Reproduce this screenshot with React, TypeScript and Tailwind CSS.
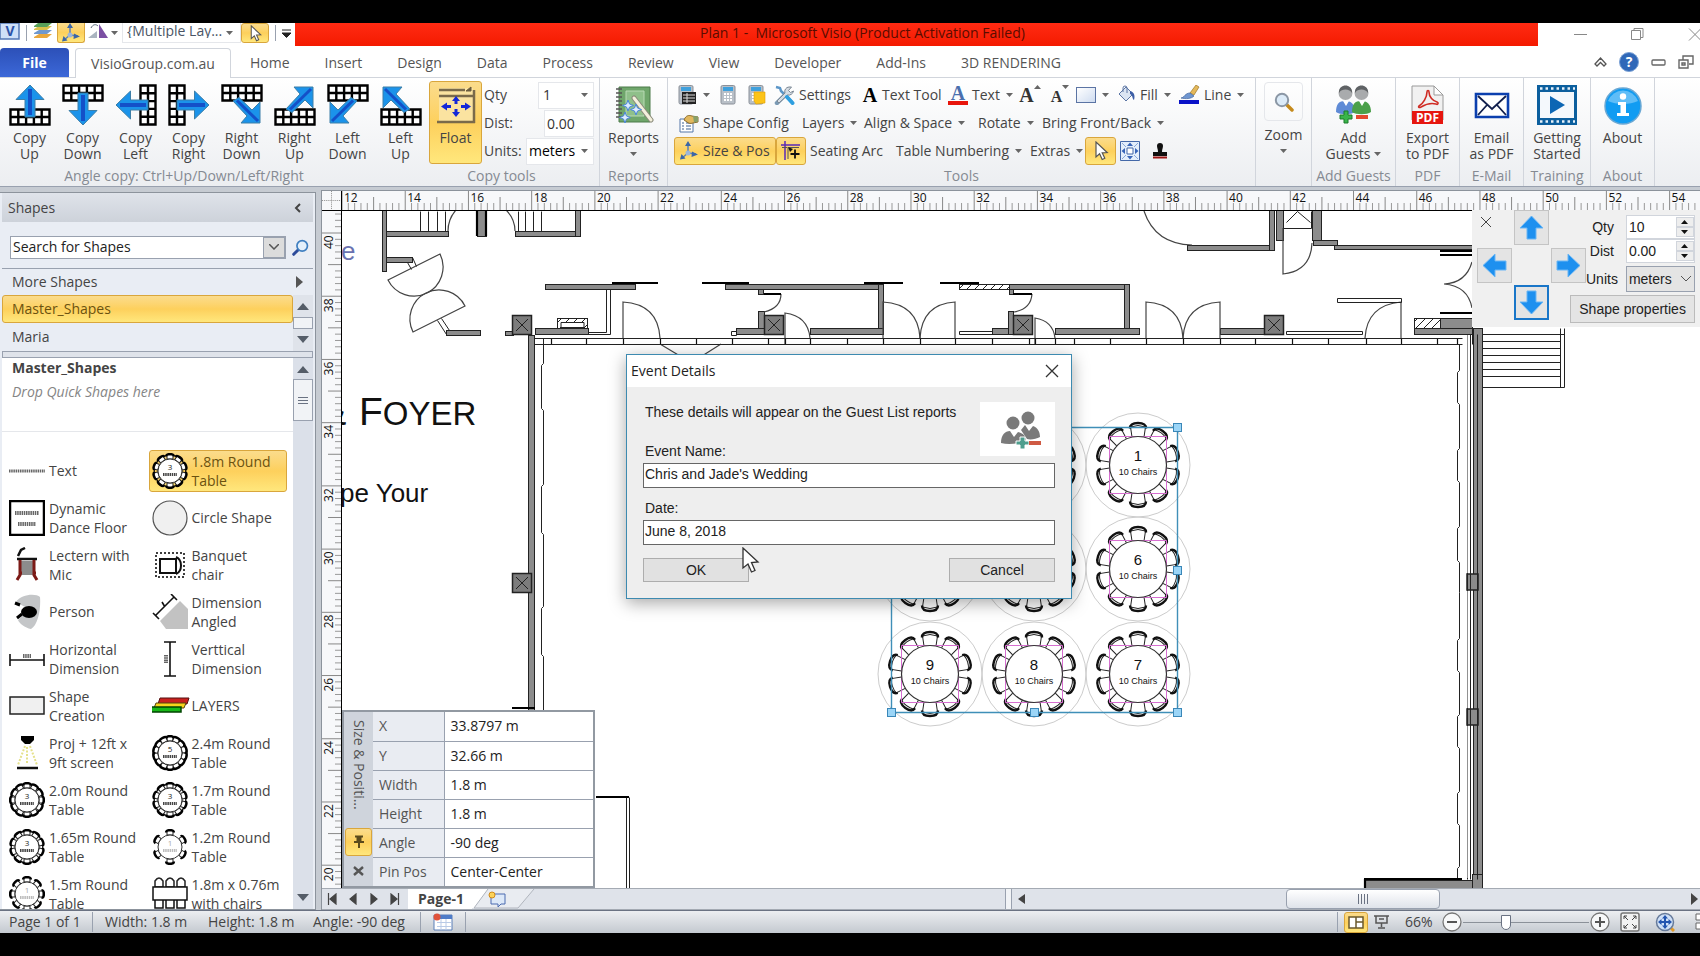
import type { ReactNode } from "react";

const UNIT = 31.61;

const highlight =
  "border border-[#d9a63c] rounded-[3px] bg-linear-to-b from-[#fbdc8c] via-[#fdd05c] to-[#ffe77c]";

/* ---------- small shared glyphs ---------- */

function Caret({ className = "" }: { className?: string }) {
  return (
    <svg width="7" height="4" viewBox="0 0 7 4" className={`shrink-0 ${className}`}>
      <path d="M0 0h7L3.500 4z" fill="#666" />
    </svg>
  );
}

function Pointer({ size = 20 }: { size?: number }) {
  return (
    <svg width={size} height={size} viewBox="0 0 20 20" className="shrink-0">
      <path
        d="M5 1v15l3.600-3.300 2.600 5.800 2.600-1.200-2.600-5.500 5-.3z"
        fill="#fff"
        stroke="#555"
        strokeWidth="1.200"
      />
    </svg>
  );
}

function Axis() {
  return (
    <svg width="20" height="20" viewBox="0 0 20 20" className="shrink-0">
      <path d="M9 3v9L3 17M9 12l8 1" stroke="#5d7fb4" strokeWidth="1.500" fill="none" />
      <path d="M9 0l3 5H6zM1 18.500l1.500-5.500 4 4.500zM19 13.500l-6-3-.5 5.500z" fill="#3c66a6" />
      <circle cx="9" cy="12" r="2.500" fill="#9db6d9" />
    </svg>
  );
}

function Glass({ size = 20, lens = "#dcebf8", handle = "#c58a1c", rim = "#8b97a5" }) {
  return (
    <svg width={size} height={size} viewBox="0 0 20 20" className="shrink-0">
      <path d="M12 12l6 6" stroke={handle} strokeWidth="3.500" strokeLinecap="round" />
      <circle cx="8" cy="8" r="6.200" fill={lens} stroke={rim} strokeWidth="2" />
    </svg>
  );
}

/* ---------- ribbon icons ---------- */

type CopyKind = "up" | "down" | "left" | "right" | "rd" | "ru" | "ld" | "lu";

const straight = "M21 1L35 15.500H26V33H16V15.500H7Z";
const diagonal = "M12 17L18 13.500L31 26L39 18V39H20L26 32Z";

const copyShapes: Record<CopyKind, { grid: string; arrow: string; transform: string }> = {
  up: { grid: "bottom", arrow: straight, transform: "" },
  down: { grid: "top", arrow: straight, transform: "rotate(180 21 21)" },
  left: { grid: "right", arrow: straight, transform: "rotate(-90 21 21)" },
  right: { grid: "left", arrow: straight, transform: "rotate(90 21 21)" },
  rd: { grid: "top", arrow: diagonal, transform: "" },
  ru: { grid: "bottom", arrow: diagonal, transform: "matrix(1 0 0 -1 0 42)" },
  ld: { grid: "top", arrow: diagonal, transform: "matrix(-1 0 0 1 42 0)" },
  lu: { grid: "bottom", arrow: diagonal, transform: "matrix(-1 0 0 -1 42 42)" },
};

function CopyIcon({ kind }: { kind: CopyKind }) {
  const shape = copyShapes[kind];
  const wide = "M1.500 1.500h39v15h-39zM1.500 9h39M9.300 1.500v15M17.100 1.500v15M24.900 1.500v15M32.700 1.500v15";
  const tall = "M1.500 1.500h15v39h-15zM9 1.500v39M1.500 9.300h15M1.500 17.100h15M1.500 24.900h15M1.500 32.700h15";
  const shift =
    shape.grid === "bottom" ? "translate(0 24)" : shape.grid === "right" ? "translate(24 0)" : "";
  return (
    <svg width="42" height="42" viewBox="0 0 42 42">
      <path
        d={shape.grid === "left" || shape.grid === "right" ? tall : wide}
        transform={shift}
        fill="#fff"
        stroke="#000"
        strokeWidth="2.400"
      />
      <g transform={shape.transform}>
        <path d={shape.arrow} fill="#1b93ea" stroke="#3d7fa8" strokeWidth="1" />
        {shape.arrow === straight ? (
          <path d="M21 5V31" stroke="#1450c8" strokeWidth="4" />
        ) : (
          <path d="M16 16.500L37 37" stroke="#1450c8" strokeWidth="3" />
        )}
      </g>
    </svg>
  );
}

function FloatIcon() {
  return (
    <svg width="42" height="42" viewBox="0 0 42 42">
      <path d="M4 4h34v34H4z" fill="#fbe3a0" />
      <path d="M4 6h26M4 12h34M39 6v33M2 38h38" stroke="#7a6a4a" strokeWidth="2.500" fill="none" />
      <path d="M31 7h5V3z" fill="#6b5c3e" stroke="#6b5c3e" />
      <path
        d="M21 12l4 5h-2.500v3h-3v-3H17zM21 33l4-5h-2.500v-3h-3v3H17zM6 22.500l6-4v2.500h4v3h-4v2.500zM36 22.500l-6-4v2.500h-4v3h4v2.500z"
        fill="#1428d8"
      />
    </svg>
  );
}

function ReportsIcon() {
  return (
    <svg width="40" height="40" viewBox="0 0 40 40">
      <path d="M5 2h31v35H5z" fill="#6fa66b" stroke="#4d7a4b" />
      <path d="M12 6h18v25H12z" fill="#8fc08a" stroke="#b9dab5" />
      <path d="M2 4h6M2 8h6M2 12h6M2 16h6M2 20h6M2 24h6M2 28h6M2 32h6" stroke="#555" strokeWidth="1.500" />
      <path d="M20 13l17 22" stroke="#8a8a7a" strokeWidth="5" strokeLinecap="round" />
      <path d="M20 13l17 22" stroke="#f3f0dc" strokeWidth="3" strokeLinecap="round" />
      <path
        d="M14 15l1.500 4 4 1.500-4 1.500-1.500 4-1.500-4-4-1.500 4-1.500zM22 19l1.500 4 4 1.500-4 1.500-1.500 4-1.500-4-4-1.500 4-1.500zM11 27l1.500 4 4 1.500-4 1.500-1.500 4-1.500-4-4-1.500 4-1.500z"
        fill="#dcecff"
        stroke="#4a86d8"
      />
    </svg>
  );
}

function Calc({ accent }: { accent?: "grid" | "note" }) {
  return (
    <svg width="19" height="20" viewBox="0 0 19 20" className="shrink-0">
      <rect x="1" y=".5" width="14" height="18.500" rx="1.500" fill="#b9c0c8" stroke="#8a9099" />
      <rect x="3" y="2" width="10" height="4" fill="#3fa0dc" />
      <path d="M4 9h8M4 12h8M4 15h8" stroke="#fff" strokeWidth="1.800" strokeDasharray="2 1" />
      {accent === "grid" && (
        <g>
          <path d="M4 7h14v12H4z" fill="#222" />
          <path d="M5 10h12M5 13h12M5 16h12M9 8v10" stroke="#ddd" />
        </g>
      )}
      {accent === "note" && <path d="M6 7h11v11l-9 1-2-3z" fill="#fcc419" stroke="#e0a000" strokeWidth=".6" />}
    </svg>
  );
}

function SettingsIcon() {
  return (
    <svg width="21" height="20" viewBox="0 0 21 20" className="shrink-0">
      <path d="M2 2l4 1 1 3 11 11" stroke="#5b96c8" strokeWidth="2.500" fill="none" />
      <path d="M3 18l9-9" stroke="#7b9ab4" strokeWidth="4.500" strokeLinecap="round" />
      <path d="M15 2a4.500 4.500 0 0 0-4 6L3 16l2 2 8.500-8a5 5 0 0 0 6-4l-3 1.500-2-2L17.500 2z" fill="#d5dce3" stroke="#7b8794" />
      <path d="M13 12l5.500 6" stroke="#2f9fe0" strokeWidth="4" strokeLinecap="round" />
    </svg>
  );
}

function ConfigIcon() {
  return (
    <svg width="20" height="19" viewBox="0 0 20 19" className="shrink-0">
      <path d="M1 5h13v13H1z" fill="#fff" stroke="#5477a8" />
      <path d="M3 9h2M7 9h5M3 12h2M7 12h5M3 15h2M7 15h5" stroke="#7f96b8" strokeWidth="1.500" />
      <path d="M5 6c2-5 5-5 8-4l6 1v5l-5 1c-3 1-5 0-6-1z" fill="#e2b85e" stroke="#8a6b2c" />
      <path d="M14 2l5 .5v5l-4 1z" fill="#88a06a" />
    </svg>
  );
}

function GuideIcon() {
  return (
    <svg width="20" height="20" viewBox="0 0 20 20" className="shrink-0">
      <path d="M0 4h19M4 0v19" stroke="#5a2ab8" strokeWidth="1.500" />
      <path d="M1 6.500h5M7 6v12M8 6.500h10" stroke="#555" />
      <path d="M14 8.500v9M9.500 13h9" stroke="#111" strokeWidth="1.800" />
      <path d="M7 6l5 2-3 3z" fill="#111" />
    </svg>
  );
}

function CenterIcon() {
  return (
    <svg width="20" height="20" viewBox="0 0 20 20" className="shrink-0">
      <path d="M.5.5h19v19H.5z" fill="#e3eefb" stroke="#4468a8" />
      <path d="M7 7h6v6H7z" fill="#fff" stroke="#4468a8" />
      <path d="M10 1.500l3 3.500H7zM10 18.500L7 15h6zM1.500 10L5 7v6zM18.500 10L15 13V7z" fill="#3764b8" />
      <path d="M2 2l4 4M18 2l-4 4M2 18l4-4M18 18l-4-4" stroke="#8aa8d8" />
    </svg>
  );
}

function StampIcon() {
  return (
    <svg width="16" height="17" viewBox="0 0 16 17" className="shrink-0">
      <path d="M5 3a3 3 0 0 1 6 0c0 2-1 3-1 6h5v4H1V9h5c0-3-1-4-1-6z" fill="#111" />
      <path d="M1 14.500h14" stroke="#9c1414" strokeWidth="2" />
    </svg>
  );
}

function BucketIcon() {
  return (
    <svg width="20" height="20" viewBox="0 0 20 20" className="shrink-0">
      <path d="M3 9l7-7 7 7-7 7z" fill="#dbe5f3" stroke="#5c76a5" />
      <path d="M7 7V3a2 2 0 0 1 4 0v5" fill="none" stroke="#5c76a5" />
      <path d="M14 6c5 1 5 6 4 9-2-1-1-5-4-6z" fill="#3c5ea6" />
    </svg>
  );
}

function BrushIcon() {
  return (
    <svg width="22" height="20" viewBox="0 0 22 20" className="shrink-0">
      <path d="M12 8l6-8 3 2-5 8z" fill="#e5b95b" stroke="#9b7627" strokeWidth=".7" />
      <path d="M3 13c3 0 4-5 9-5l4 3c-3 3-8 3-13 2z" fill="#6f96d0" stroke="#40659f" strokeWidth=".7" />
      <path d="M1 15h20v4H1z" fill="#0a12c8" />
    </svg>
  );
}

function Person({ x, y, coat }: { x: number; y: number; coat: string }) {
  return (
    <g transform={`translate(${x} ${y})`}>
      <path d="M0 27c0-8 3-11 9-11s10 3 10 11c-4 3-15 3-19 0z" fill={coat} />
      <path d="M7 16l3 5 3-5z" fill="#fff" />
      <circle cx="9.500" cy="8" r="7" fill="#a9abad" />
      <path d="M3 8c-1-10 14-10 13 0-2-4-10-5-13 0z" fill="#5f6265" />
    </g>
  );
}

function GuestsIcon() {
  return (
    <svg width="38" height="40" viewBox="0 0 38 40">
      <Person x={1} y={0} coat="#5f8bd6" />
      <Person x={17} y={0} coat="#4ba04a" />
      <path d="M9 26h4v4h4v4h-4v4H9v-4H5v-4h4z" fill="#39b54a" stroke="#1c7a2a" />
      <path d="M21 30h12v4H21z" fill="#e5482e" />
    </svg>
  );
}

function PdfIcon() {
  return (
    <svg width="34" height="40" viewBox="0 0 34 40">
      <path d="M1 1h22l9 9v25H1z" fill="#f1f1f1" stroke="#9a9a9a" />
      <path d="M23 1v9h9z" fill="#fff" stroke="#9a9a9a" />
      <path
        d="M8 21c4-2 8-9 8-14 0-2 2-2 2 0 0 5 4 9 8 10 2 1 1 3-1 2-4-1-10 0-15 3-2 1-3 0-2-1z"
        fill="none"
        stroke="#cf2b23"
        strokeWidth="1.600"
      />
      <path d="M1 26h31v13H1z" fill="#e6160f" />
      <text x="16.500" y="37" textAnchor="middle" fontSize="12" fontWeight="700" fill="#fff">
        PDF
      </text>
    </svg>
  );
}

function MailIcon() {
  return (
    <svg width="36" height="40" viewBox="0 0 36 40">
      <path d="M2 9h32v23H2z" fill="#fff" stroke="#0b3fae" strokeWidth="2.600" />
      <path d="M4 11l14 13 14-13M4 30l9-10M32 30l-9-10" fill="none" stroke="#111f4d" strokeWidth="1.800" />
    </svg>
  );
}

function FilmIcon() {
  return (
    <svg width="40" height="40" viewBox="0 0 40 40">
      <path d="M0 0h40v40H0z" fill="#0c5f9e" />
      <path d="M3 7h34v26H3z" fill="#f4f8fc" />
      <path d="M3 3.500h35M3 36.500h35" stroke="#e8f2fa" strokeWidth="2.500" strokeDasharray="2.500 3" />
      <path d="M13 11l15 9-15 9z" fill="#0c66b4" />
    </svg>
  );
}

function AboutIcon() {
  return (
    <svg width="40" height="40" viewBox="0 0 40 40">
      <circle cx="20" cy="21" r="18" fill="#119cf2" stroke="#6aa8d4" strokeWidth="1.500" />
      <path d="M5 16a16 16 0 0 1 30 0c-8 4-22 4-30 0z" fill="#5fbdf7" />
      <circle cx="20" cy="11.500" r="3.200" fill="#fff" />
      <path d="M15 17h8v11h3v3H14v-3h3.500v-8H15z" fill="#fff" />
    </svg>
  );
}

/* ---------- title and tabs ---------- */

function TitleBar() {
  return (
    <header className="flex h-6 shrink-0 items-start bg-white">
      <div className="flex h-5 shrink-0 items-center">
        <svg width="20" height="20" viewBox="0 0 20 20">
          <path d="M0 0h19v16H0z" fill="#cfe0f7" stroke="#5377b5" strokeWidth="1.500" />
          <text x="10" y="13" textAnchor="middle" fontSize="14" fontWeight="700" fill="#2b53a8">
            V
          </text>
        </svg>
        <div className="mx-1.5 h-4 w-px bg-gray-400" />
        <svg width="20" height="20" viewBox="0 0 20 20">
          <path d="M1 14l5-3h13l-5 4H1z" fill="#e9a73c" />
          <path d="M1 10l5-3h13l-5 4H1z" fill="#6f98cf" />
          <path d="M1 6l5-3h13l-5 4H1z" fill="#d9c04a" />
          <path d="M1 3l4-3h14l-5 4H1z" fill="#58a05a" />
        </svg>
        <button
          aria-label="Size and position"
          className={`ml-1 flex h-5 w-7 items-center justify-center overflow-hidden rounded-t-none border-t-0 ${highlight}`}
        >
          <Axis />
        </button>
        <svg width="24" height="20" viewBox="0 0 24 20" className="ml-0.5">
          <path d="M1 15l9-7v7z" fill="#aab4c0" />
          <path d="M12 1l9 14h-9z" fill="#7b4fa3" />
          <path d="M4 5c2-4 5-4 7-2" stroke="#567" fill="none" />
        </svg>
        <Caret />
        <label className="relative ml-1 flex items-center">
          <span className="sr-only">Layer</span>
          <select className="h-5 w-[119px] appearance-none border border-t-0 border-gray-200 bg-white pb-1 pl-1 text-sm leading-4 text-gray-600">
            <option>{"{Multiple Lay..."}</option>
          </select>
          <Caret className="absolute right-2" />
        </label>
        <button aria-label="Pointer tool" className={`flex h-5 w-7 items-center justify-center ${highlight}`}>
          <Pointer size={17} />
        </button>
        <div className="mx-1.5 h-4 w-px bg-gray-400" />
        <svg width="9" height="9" viewBox="0 0 9 9" className="mr-1">
          <path d="M0 1h9M0 4h9L4.500 8.500z" stroke="#222" fill="#222" />
        </svg>
      </div>
      <div className="h-[23px] flex-1 bg-linear-to-b from-[#ff2a12] to-[#f41a00] pr-[108px] text-center text-sm leading-5 text-[#5a0c00]">
        Plan 1 -&nbsp; Microsoft Visio (Product Activation Failed)
      </div>
      <div className="flex w-[162px] shrink-0 items-center justify-end gap-11 overflow-hidden">
        <button aria-label="Minimize">
          <svg width="13" height="22" viewBox="0 0 13 22">
            <path d="M0 11.500h13" stroke="#888" />
          </svg>
        </button>
        <button aria-label="Restore">
          <svg width="13" height="22" viewBox="0 0 13 22">
            <path d="M.5 7.500h9v9h-9zM3 7.500v-2h9v9h-2.500" fill="none" stroke="#888" />
          </svg>
        </button>
        <button aria-label="Close">
          <svg width="12" height="22" viewBox="0 0 12 22">
            <path d="M1 5.500l12 12M13 5.500l-12 12" stroke="#888" />
          </svg>
        </button>
      </div>
    </header>
  );
}

const tabs = ["Home", "Insert", "Design", "Data", "Process", "Review", "View", "Developer", "Add-Ins", "3D RENDERING"];

function TabBar() {
  return (
    <nav className="flex h-[31px] shrink-0 items-end border-b border-gray-300 bg-white text-sm text-[#555]">
      <button className="h-[29px] w-[69px] rounded-t-sm bg-linear-to-b from-[#2c50b8] to-[#3c68d8] font-bold text-white">
        File
      </button>
      <button className="-mb-px ml-1.5 h-[30px] w-[156px] rounded-t border border-b-0 border-gray-300 bg-white">
        VisioGroup.com.au
      </button>
      <div className="ml-[19px] flex h-[29px] flex-1 items-center gap-[35px]">
        {tabs.map((tab) => (
          <button key={tab} className="whitespace-nowrap">
            {tab}
          </button>
        ))}
      </div>
      <div className="flex h-[31px] items-center gap-3 pr-1.5">
        <svg width="13" height="12" viewBox="0 0 13 12">
          <path d="M1 8l5.500-6L12 8l-2 2-3.500-3.500L3 10z" fill="#fff" stroke="#555" strokeWidth="1.300" />
        </svg>
        <button aria-label="Help">
          <svg width="20" height="20" viewBox="0 0 20 20">
            <circle cx="10" cy="10" r="9.500" fill="#3068b8" stroke="#7da3d6" />
            <text x="10" y="15" textAnchor="middle" fontSize="14" fontWeight="700" fill="#fff">
              ?
            </text>
          </svg>
        </button>
        <svg width="15" height="12" viewBox="0 0 15 12">
          <rect x="1" y="4" width="13" height="5" rx="1" fill="#fff" stroke="#666" strokeWidth="1.300" />
        </svg>
        <svg width="16" height="14" viewBox="0 0 16 14">
          <path d="M5 5V1h10v8h-4M1 5h9v8H1zM4 8h3v2H4z" fill="none" stroke="#666" strokeWidth="1.400" />
        </svg>
      </div>
    </nav>
  );
}

/* ---------- ribbon ---------- */

function BigButton({
  icon,
  lines,
  caret,
  className = "w-[53px] pt-[6px]",
}: {
  icon: ReactNode;
  lines: string[];
  caret?: boolean;
  className?: string;
}) {
  return (
    <button className={`flex flex-col items-center text-sm leading-4 whitespace-nowrap ${className}`}>
      <span className="mb-1 flex h-[42px] items-center">{icon}</span>
      {lines.map((line, i) => (
        <span key={line} className="flex items-center gap-1">
          {line}
          {caret && i === lines.length - 1 && <Caret />}
        </span>
      ))}
    </button>
  );
}

function Group({ label, className, children }: { label: string; className: string; children: ReactNode }) {
  return (
    <div className={`flex shrink-0 flex-col border-r border-gray-300 ${className}`}>
      <div className="flex flex-1 justify-center">{children}</div>
      <div className="h-[18px] text-center text-sm leading-4 whitespace-nowrap text-[#858a92]">{label}</div>
    </div>
  );
}

function ToolButton({
  icon,
  text,
  caret,
  className = "",
}: {
  icon?: ReactNode;
  text?: string;
  caret?: boolean;
  className?: string;
}) {
  return (
    <button className={`flex h-7 shrink-0 items-center gap-1 whitespace-nowrap ${className}`}>
      {icon}
      {text && <span>{text}</span>}
      {caret && <Caret className="ml-0.5" />}
    </button>
  );
}

const copyButtons: { kind: CopyKind; lines: string[] }[] = [
  { kind: "up", lines: ["Copy", "Up"] },
  { kind: "down", lines: ["Copy", "Down"] },
  { kind: "left", lines: ["Copy", "Left"] },
  { kind: "right", lines: ["Copy", "Right"] },
  { kind: "rd", lines: ["Right", "Down"] },
  { kind: "ru", lines: ["Right", "Up"] },
  { kind: "ld", lines: ["Left", "Down"] },
  { kind: "lu", lines: ["Left", "Up"] },
];

function CopyTools() {
  return (
    <div className="flex w-[600px] shrink-0 flex-col border-r border-gray-300">
      <div className="flex flex-1 pl-[3px]">
        {copyButtons.map((button) => (
          <BigButton key={button.kind} icon={<CopyIcon kind={button.kind} />} lines={button.lines} />
        ))}
        <BigButton
          icon={<FloatIcon />}
          lines={["Float"]}
          className={`ml-0.5 mt-[3px] h-[83px] w-[53px] pt-[2px] ${highlight}`}
        />
        <div className="flex w-[112px] flex-col pt-[3px] pl-0.5 text-sm">
          <label className="flex h-7 items-center justify-between">
            Qty
            <span className="relative flex items-center">
              <select className="h-[27px] w-14 appearance-none border border-gray-200 bg-white pl-1 text-[#333]">
                <option>1</option>
              </select>
              <Caret className="absolute right-1.5" />
            </span>
          </label>
          <label className="flex h-7 items-center justify-between">
            Dist:
            <input defaultValue="0.00" className="h-[27px] w-[50px] border border-gray-200 bg-white pl-0.5 text-[#333]" />
          </label>
          <label className="flex h-7 items-center justify-between">
            Units:
            <span className="relative flex items-center">
              <select className="h-[27px] w-17 appearance-none border border-gray-200 bg-white pl-0.5 text-black">
                <option>meters</option>
              </select>
              <Caret className="absolute right-1.5" />
            </span>
          </label>
        </div>
      </div>
      <div className="flex h-[18px] text-center text-sm leading-4 text-[#858a92]">
        <div className="w-[368px]">Angle copy: Ctrl+Up/Down/Left/Right</div>
        <div className="flex-1 pl-9">Copy tools</div>
      </div>
    </div>
  );
}

function ToolsPanel() {
  return (
    <div className="flex flex-1 flex-col pt-[3px] pl-1.5 text-sm">
      <div className="flex">
        <ToolButton className="w-10 pl-1" icon={<Calc accent="grid" />} caret />
        <ToolButton className="w-7 pl-1.5" icon={<Calc />} />
        <ToolButton className="w-7 pl-1.5" icon={<Calc accent="note" />} />
        <ToolButton className="w-22 pl-1" icon={<SettingsIcon />} text="Settings" />
        <ToolButton
          className="w-22 pl-1"
          icon={<span className="w-4 font-['Liberation_Serif',serif] text-xl leading-5 font-bold text-black">A</span>}
          text="Text Tool"
        />
        <ToolButton
          className="w-17 pl-0.5"
          icon={
            <span className="w-5 border-b-4 border-[#e8150c] font-['Liberation_Serif',serif] text-xl leading-4 font-bold text-[#4a6fae]">
              A
            </span>
          }
          text="Text"
          caret
        />
        <ToolButton
          className="w-8 justify-center"
          icon={
            <>
              <span className="-mr-1 font-['Liberation_Serif',serif] text-xl leading-5 font-bold text-[#333]">A</span>
              <Caret className="mb-4 rotate-180" />
            </>
          }
        />
        <ToolButton
          className="w-7 justify-center"
          icon={
            <>
              <span className="mt-1 -mr-1 font-['Liberation_Serif',serif] text-base leading-5 font-bold text-[#333]">A</span>
              <Caret className="mb-4" />
            </>
          }
        />
        <ToolButton
          className="w-10"
          icon={<span className="ml-0.5 h-4 w-5 border border-[#5b74a4] bg-linear-to-br from-white to-[#cfdcf0]" />}
          caret
        />
        <ToolButton className="w-16 pl-0.5" icon={<BucketIcon />} text="Fill" caret />
        <ToolButton className="w-17" icon={<BrushIcon />} text="Line" caret />
      </div>
      <div className="flex">
        <ToolButton className="w-32 pl-[5px]" icon={<ConfigIcon />} text="Shape Config" />
        <ToolButton className="w-[62px]" text="Layers" caret />
        <ToolButton className="w-[114px]" text="Align & Space" caret />
        <ToolButton className="w-16" text="Rotate" caret />
        <ToolButton text="Bring Front/Back" caret />
      </div>
      <div className="flex">
        <ToolButton className={`w-[102px] pl-1 ${highlight}`} icon={<Axis />} text="Size & Pos" />
        <ToolButton className={`w-[30px] justify-center ${highlight}`} icon={<GuideIcon />} />
        <ToolButton className="w-[90px] pl-1" text="Seating Arc" />
        <ToolButton className="w-[134px]" text="Table Numbering" caret />
        <ToolButton className="w-[55px]" text="Extras" caret />
        <ToolButton className={`w-[31px] justify-center ${highlight}`} icon={<Pointer />} />
        <ToolButton className="w-8 pl-1" icon={<CenterIcon />} />
        <ToolButton className="pl-1" icon={<StampIcon />} />
      </div>
    </div>
  );
}

function Ribbon() {
  return (
    <section className="flex h-[109px] shrink-0 overflow-hidden border-b border-gray-400 bg-linear-to-b from-white to-[#eceef1] text-[#444]">
      <CopyTools />
      <Group label="Reports" className="w-[68px]">
        <button className="flex flex-col items-center pt-[7px] text-sm leading-4">
          <span className="mb-1 h-[41px]">
            <ReportsIcon />
          </span>
          Reports
          <Caret className="mt-1.5" />
        </button>
      </Group>
      <Group label="Tools" className="w-[588px]">
        <ToolsPanel />
      </Group>
      <Group label="" className="w-14">
        <button className="flex flex-col items-center pt-1 text-sm leading-4">
          <span className="mb-[6px] flex h-[39px] w-[39px] items-center justify-center rounded border border-gray-200">
            <Glass />
          </span>
          Zoom
          <Caret className="mt-1.5" />
        </button>
      </Group>
      <Group label="Add Guests" className="w-[84px]">
        <BigButton icon={<GuestsIcon />} lines={["Add", "Guests"]} caret />
      </Group>
      <Group label="PDF" className="w-16">
        <BigButton icon={<PdfIcon />} lines={["Export", "to PDF"]} />
      </Group>
      <Group label="E-Mail" className="w-16">
        <BigButton icon={<MailIcon />} lines={["Email", "as PDF"]} />
      </Group>
      <Group label="Training" className="w-[67px]">
        <BigButton icon={<FilmIcon />} lines={["Getting", "Started"]} />
      </Group>
      <Group label="About" className="w-16">
        <BigButton icon={<AboutIcon />} lines={["About"]} />
      </Group>
    </section>
  );
}

/* ---------- shapes panel ---------- */

function RoundThumb({ chairs, label = "3", faint }: { chairs: number; label?: string; faint?: boolean }) {
  return (
    <svg width="36" height="36" viewBox="-18 -18 36 36">
      {Array.from({ length: chairs }, (_, i) => (
        <g key={i} transform={`rotate(${(360 / chairs) * i})`}>
          <path d="M-3-12v-4h6v4z" fill="#fff" stroke="#222" />
          <path d="M-4-14.500q0-2.500 4-2.500t4 2.500" fill="none" stroke="#000" strokeWidth="2.200" />
        </g>
      ))}
      <circle r="12" fill="#fff" stroke="#333" />
      <text y="-1" textAnchor="middle" fontSize="8" fill={faint ? "#aaa" : "#222"}>
        {label}
      </text>
      <path d="M-7 3.500H7" stroke={faint ? "#bbb" : "#444"} strokeWidth="3" strokeDasharray="1.500 .7" />
    </svg>
  );
}

function Thumb({ children }: { children: ReactNode }) {
  return (
    <svg width="36" height="36" viewBox="0 0 36 36">
      {children}
    </svg>
  );
}

const shapes: { name: string; active?: boolean; icon: ReactNode }[] = [
  {
    name: "Text",
    icon: (
      <Thumb>
        <path d="M0 18h36" stroke="#666" strokeWidth="3" strokeDasharray="1.500 .7" />
      </Thumb>
    ),
  },
  { name: "1.8m Round Table", active: true, icon: <RoundThumb chairs={10} /> },
  {
    name: "Dynamic Dance Floor",
    icon: (
      <Thumb>
        <path d="M1 1h34v34H1z" fill="#fff" stroke="#000" strokeWidth="2.500" />
        <path d="M6 13h24M9 24h18" stroke="#666" strokeWidth="4" strokeDasharray="1.500 .7" />
      </Thumb>
    ),
  },
  {
    name: "Circle Shape",
    icon: (
      <Thumb>
        <circle cx="18" cy="18" r="17" fill="#f0f0f0" stroke="#555" strokeWidth="1.200" />
      </Thumb>
    ),
  },
  {
    name: "Lectern with Mic",
    icon: (
      <Thumb>
        <path d="M11 14h14v14H11z" fill="#8c8c8c" />
        <path d="M8 12h20M9 9l3-6 4-2" stroke="#111" strokeWidth="2.500" fill="none" />
        <path d="M11 13v15l-3 5M25 13v15l3 5M10 26h3M24 26h3" stroke="#7c1a16" strokeWidth="3" fill="none" />
      </Thumb>
    ),
  },
  {
    name: "Banquet chair",
    icon: (
      <Thumb>
        <path d="M4 6h28v24H4z" fill="none" stroke="#000" strokeWidth="1.500" strokeDasharray="2 2" />
        <path d="M8 12h16v14H8zM24 10q5 2 5 8.500T24 27" fill="none" stroke="#111" strokeWidth="2" />
      </Thumb>
    ),
  },
  {
    name: "Person",
    icon: (
      <Thumb>
        <path d="M7 8C12 0 27-1 31 3c1 12-2 28-9 32-6-1-12-6-13-9l5-5 2-8z" fill="#c4c6c8" />
        <ellipse cx="20" cy="18" rx="8" ry="6" fill="#000" />
        <path d="M13 20l-5 4M6 9l5 2" stroke="#000" strokeWidth="3" />
      </Thumb>
    ),
  },
  {
    name: "Dimension Angled",
    icon: (
      <Thumb>
        <path d="M8 27L28 7l8 8v20H14z" fill="#c2c2c2" />
        <path d="M4 21L22 3M1 19l6 6M19 0l6 6M10 8l3 5" stroke="#111" strokeWidth="1.600" />
      </Thumb>
    ),
  },
  {
    name: "Horizontal Dimension",
    icon: (
      <Thumb>
        <path d="M1 19h34M1 13v12M35 13v12" stroke="#111" strokeWidth="1.600" />
        <path d="M14 15h8" stroke="#666" strokeWidth="4" strokeDasharray="1.500 .7" />
      </Thumb>
    ),
  },
  {
    name: "Verttical Dimension",
    icon: (
      <Thumb>
        <path d="M18 1v34M12 1h12M12 35h12" stroke="#111" strokeWidth="1.600" />
        <path d="M14 14v8" stroke="#666" strokeWidth="4" strokeDasharray="1.500 .7" />
      </Thumb>
    ),
  },
  {
    name: "Shape Creation",
    icon: (
      <Thumb>
        <path d="M1 9h34v17H1z" fill="#f0f0f0" stroke="#222" strokeWidth="1.500" />
      </Thumb>
    ),
  },
  {
    name: "LAYERS",
    icon: (
      <svg width="40" height="36" viewBox="2 0 40 36">
        <path d="M10 10h29l-2 6H8z" fill="#c9211e" stroke="#511" />
        <path d="M6 15h30l-2 5H4z" fill="#f7d51d" stroke="#541" />
        <path d="M1 19h30v5H1z" fill="#18b818" stroke="#040" strokeWidth="1.500" />
      </svg>
    ),
  },
  {
    name: "Proj + 12ft x 9ft screen",
    icon: (
      <Thumb>
        <path d="M12 1h13v4l-4 4h-5l-4-4z" fill="#000" />
        <path d="M16 11L9 30M21 11l7 19M18 12v16" stroke="#e5e18a" strokeWidth="2" strokeDasharray="2 1.500" />
        <path d="M8 33h21" stroke="#111" strokeWidth="2.500" />
      </Thumb>
    ),
  },
  { name: "2.4m Round Table", icon: <RoundThumb chairs={14} label="5" /> },
  { name: "2.0m Round Table", icon: <RoundThumb chairs={12} /> },
  { name: "1.7m Round Table", icon: <RoundThumb chairs={10} /> },
  { name: "1.65m Round Table", icon: <RoundThumb chairs={10} /> },
  { name: "1.2m Round Table", icon: <RoundThumb chairs={6} label="1" faint /> },
  { name: "1.5m Round Table", icon: <RoundThumb chairs={8} label="1" faint /> },
  {
    name: "1.8m x 0.76m with chairs",
    icon: (
      <Thumb>
        <path d="M3 11V5q4-6 8 0v6zM14 11V5q4-6 8 0v6zM25 11V5q4-6 8 0v6z" fill="#fff" stroke="#222" strokeWidth="1.500" />
        <path d="M1 11h34v13H1zM3 24v8h8v-8M14 24v8h8v-8M25 24v8h8v-8" fill="#fff" stroke="#111" strokeWidth="1.500" />
      </Thumb>
    ),
  },
];

function ScrollArrow({ up }: { up?: boolean }) {
  return (
    <svg width="12" height="7" viewBox="0 0 12 7" className="shrink-0">
      <path d={up ? "M0 7h12L6 0z" : "M0 0h12L6 7z"} fill="#555d68" />
    </svg>
  );
}

function ShapesPanel() {
  return (
    <aside className="mt-0.5 flex w-[316px] shrink-0 flex-col border border-l-0 border-[#8c939c] bg-[#e9edf4] pr-0.5 pl-0.5 text-sm text-[#444]">
      <div className="flex h-[29px] shrink-0 items-center justify-between bg-linear-to-b from-[#dfe3ea] to-[#cdd2da] pr-3 pl-1.5">
        Shapes
        <button aria-label="Minimize the Shapes window">
          <svg width="7" height="10" viewBox="0 0 7 10">
            <path d="M6 1L2 5l4 4" stroke="#444" strokeWidth="2" fill="none" />
          </svg>
        </button>
      </div>
      <div className="flex h-[47px] shrink-0 items-center gap-1.5 border-b border-gray-400 pt-1 pl-2">
        <label className="flex h-[23px] w-[276px] border border-gray-400 bg-white">
          <input
            aria-label="Search for Shapes"
            defaultValue="Search for Shapes"
            className="min-w-0 flex-1 pl-0.5 text-[#222] outline-none"
          />
          <span className="flex w-[22px] items-center justify-center border border-gray-400 bg-[#dcdcdc]">
            <svg width="10" height="6" viewBox="0 0 10 6">
              <path d="M0 0l5 5 5-5" fill="none" stroke="#555" strokeWidth="1.500" />
            </svg>
          </span>
        </label>
        <button aria-label="Search" className="-scale-x-100">
          <Glass size={17} lens="#e4f0fb" handle="#2d4b9a" rim="#3f7fc0" />
        </button>
      </div>
      <button className="flex h-[26px] shrink-0 items-center justify-between pr-2.5 pl-2.5">
        More Shapes
        <svg width="7" height="12" viewBox="0 0 7 12">
          <path d="M0 0l7 6-7 6z" fill="#555" />
        </svg>
      </button>
      <div className="flex h-[56px] shrink-0">
        <div className="flex flex-1 flex-col">
          <button className={`h-7 pl-[9px] text-left text-[#6b5210] ${highlight}`}>Master_Shapes</button>
          <button className="h-7 pl-2.5 text-left">Maria</button>
        </div>
        <div className="flex w-5 flex-col items-center justify-between bg-[#dfe3ea] py-2">
          <ScrollArrow up />
          <span className="h-3 w-5 border border-gray-400 bg-[#f1f3f6]" />
          <ScrollArrow />
        </div>
      </div>
      <div className="h-[7px] shrink-0 border border-gray-400 bg-[#dfe3ea]" />
      <div className="flex min-h-0 flex-1">
        <div className="flex min-w-0 flex-1 flex-col overflow-hidden bg-white">
          <h2 className="shrink-0 pl-2.5 leading-5 font-bold">Master_Shapes</h2>
          <p className="mt-0.5 h-[52px] shrink-0 border-b border-gray-200 pl-2.5 leading-6 text-[#858585] italic">
            Drop Quick Shapes here
          </p>
          <ul className="mt-[15px] grid auto-rows-[47px] grid-cols-2 pr-0.5 pl-1">
            {shapes.map((shape) => (
              <li key={shape.name} className="flex items-center">
                <button
                  className={`flex h-[42px] items-center gap-1 text-left leading-[19px] ${
                    shape.active ? `w-[138px] pl-0.5 text-[#6b5210] ${highlight}` : "pl-[3px]"
                  }`}
                >
                  <span className="w-9 shrink-0">{shape.icon}</span>
                  <span className="w-[89px]">{shape.name}</span>
                </button>
              </li>
            ))}
          </ul>
        </div>
        <div className="flex w-5 shrink-0 flex-col items-center bg-[#dbe0e9] py-2">
          <ScrollArrow up />
          <span className="mt-1.5 flex h-[42px] w-5 flex-col items-center justify-center gap-0.5 border border-gray-400 bg-[#f1f3f6]">
            <span className="h-px w-2.5 bg-gray-500" />
            <span className="h-px w-2.5 bg-gray-500" />
            <span className="h-px w-2.5 bg-gray-500" />
          </span>
          <span className="flex-1" />
          <ScrollArrow />
        </div>
      </div>
    </aside>
  );
}

/* ---------- rulers ---------- */

function HorizontalRuler() {
  const units = Array.from({ length: 44 }, (_, i) => i);
  return (
    <svg className="h-5 min-w-0 flex-1 border-b border-black bg-[#f7f8fa] font-['Open_Sans',sans-serif]">
      {units.map((unit) => {
        const x = unit * UNIT;
        return (
          <g key={unit}>
            <path d={`M${x} ${unit % 2 ? 6 : 0}V20`} stroke="#888" />
            {[1, 2, 3, 4].map((n) => (
              <path key={n} d={`M${x + (n * UNIT) / 5} 12V20`} stroke="#999" />
            ))}
            {unit % 2 === 0 && (
              <text x={x + 2} y="11" fontSize="12" fill="#111">
                {12 + unit}
              </text>
            )}
          </g>
        );
      })}
    </svg>
  );
}

function VerticalRuler() {
  const units = Array.from({ length: 24 }, (_, i) => i - 1);
  return (
    <svg className="h-full w-5 shrink-0 border-r border-black bg-[#f7f8fa] font-['Open_Sans',sans-serif]">
      {units.map((unit) => {
        const y = 22 + unit * UNIT;
        return (
          <g key={unit}>
            <path d={`M${unit % 2 ? 6 : 0} ${y}H20`} stroke="#888" />
            {[1, 2, 3, 4].map((n) => (
              <path key={n} d={`M13 ${y + (n * UNIT) / 5}H20`} stroke="#999" />
            ))}
            {unit % 2 === 0 && (
              <text transform={`translate(11 ${y + 16}) rotate(-90)`} fontSize="12" fill="#111">
                {40 - unit}
              </text>
            )}
          </g>
        );
      })}
    </svg>
  );
}

/* ---------- drawing ---------- */

// x, y, width, height of every filled wall segment
const walls = [
  [382, 208, 4, 63], [386, 231, 62, 5], [477, 208, 9, 28], [515, 231, 65, 5], [575, 208, 5, 28],
  [386, 257, 26, 5], [446, 330, 34, 5], [505, 331, 8, 4], [545, 284, 90, 5], [535, 328, 53, 6],
  [528, 335, 6, 375], [725, 284, 158, 5], [878, 284, 5, 50], [758, 289, 5, 5], [758, 311, 6, 23],
  [736, 328, 28, 6], [810, 328, 73, 6], [1009, 284, 120, 5], [1124, 284, 5, 50], [1009, 289, 4, 5],
  [1008, 311, 5, 23], [992, 328, 16, 6], [1055, 328, 84, 6], [1220, 328, 44, 6], [1187, 245, 87, 5],
  [1269, 208, 5, 42], [1276, 208, 7, 32], [1312, 208, 9, 32], [1313, 240, 24, 5], [1334, 245, 138, 4],
  [1440, 318, 32, 10], [1414, 328, 58, 6], [1473, 328, 9, 562], [1364, 880, 109, 8], [1472, 874, 10, 14],
];

const columns = [
  [512, 315], [764, 315], [1013, 315], [1264, 315], [512, 573],
];

const openings = [
  551, 586, 623, 660, 696, 732, 768, 785, 810, 847, 883, 920, 955, 992, 1029, 1035, 1055, 1074, 1110, 1146, 1183,
  1220, 1255, 1292, 1328, 1366, 1401, 1437, 1457,
];

const doors = [
  "M623 338V302Q658 304 660 338",
  "M785 344V313Q808 316 810 338",
  "M883 338V302Q918 304 920 338",
  "M955 338V302Q922 304 920 338",
  "M1035 344V318Q1053 321 1055 338",
  "M1146 338V302Q1181 304 1183 338",
  "M1220 338V302Q1185 304 1183 338",
  "M1401 338V302Q1367 305 1365 338",
  "M781 294Q781 308 764 312",
  "M1032 294Q1031 309 1014 312",
  "M1144 211Q1155 244 1192 245",
  "M1283 228V274Q1311 271 1312 243",
  "M1472 262Q1466 283 1444 284Q1468 286 1472 308",
  "M448 231Q448 219 456 210",
  "M506 210Q515 219 515 231",
  "M388 280L440 254A29 29 0 0 1 388 280Z",
  "M413 332A29 29 0 0 1 465 306Z",
  "M660 344L680 356M702 356L721 344",
];

const heavy = [
  "M612 283H658M702 283H749M864 283H903M940 283H979M764 294H781M1013 294H1032",
  "M477 211V236M486 211V236",
  "M596 797H629M512 708H535M1364 879H1462M1440 251H1472M1440 255H1472M1440 313H1472",
  "M1365 879V888",
];

const thin = [
  "M420 211V231M428 211V231M437 211V231M445 211V231M518 211V231M525 211V231M533 211V231M541 211V231",
  "M606 289V332H588M610 289V334H588M534 338H1462M534 344H1462",
  "M543 338V363L541 365V408L543 410V484L541 486V532L543 534V606L541 608V654L543 656V710",
  "M626 797V888M629 797V888M959 331H992V334H959ZM1286 331H1362V334H1286ZM731 331H736V335H731Z",
  "M1337 298H1401V302H1337ZM1472 211V245M1283 211V228H1311V211M1286 222L1297 211L1310 222",
  "M412 257L416 266M407 262L411 269M437 320L446 334M441 318L449 330",
  "M1459 344V370L1457 372V402L1459 404V448L1457 450V480L1459 482V526L1457 528V560L1459 562V592L1459 638L1457 640V670L1459 672V714L1457 716V746L1459 748V791L1457 793V823L1459 825V866L1457 868V879",
  "M1467 334V879M1470 334V879M1477 334V879M1466 328H1482M1472 334V344",
  "M1482 334H1564M1482 341H1560M1482 348H1560M1482 355H1560M1482 362H1560M1482 369H1560M1482 376H1560M1482 387H1564M1560 328V387M1564 328V387",
];

const blocks = [
  [1467, 574], [1467, 709],
];

type Table = { x: number; y: number; label?: string };

const tables: Table[] = [
  { x: 930, y: 465 },
  { x: 1034, y: 465 },
  { x: 1138, y: 465, label: "1" },
  { x: 930, y: 569 },
  { x: 1034, y: 569 },
  { x: 1138, y: 569, label: "6" },
  { x: 930, y: 674, label: "9" },
  { x: 1034, y: 674, label: "8" },
  { x: 1138, y: 674, label: "7" },
];

function RoundTable({ x, y, label }: Table) {
  return (
    <g transform={`translate(${x} ${y})`}>
      <circle r="52" fill="none" stroke="#ccc" />
      {Array.from({ length: 10 }, (_, i) => (
        <g key={i} transform={`rotate(${36 * i})`}>
          <path d="M-6-28L-7.500-38Q0-41 7.500-38L6-28" fill="#fff" stroke="#222" />
          <path d="M-8-36.500Q-8-42 0-42T8-36.500" fill="none" stroke="#111" strokeWidth="2.400" />
        </g>
      ))}
      <path d="M-28.500-28.500h57v57h-57z" fill="none" stroke="#d66fd0" />
      <circle r="28.500" fill="#fff" stroke="#333" strokeWidth="1.200" />
      {label && (
        <g fill="#111" textAnchor="middle">
          <text y="-4" fontSize="15">
            {label}
          </text>
          <text y="10" fontSize="9">
            10 Chairs
          </text>
        </g>
      )}
    </g>
  );
}

function FloorPlan() {
  return (
    <svg className="block h-full w-full bg-white font-['Liberation_Sans',sans-serif]">
      <defs>
        <pattern id="hatch" width="8" height="8" patternUnits="userSpaceOnUse">
          <path d="M0 8L8 0" stroke="#222" />
        </pattern>
      </defs>
      <g transform="translate(-342 -211)">
        <g fill="#8c8c8c" stroke="#222">
          {walls.map(([x, y, w, h], i) => (
            <rect key={i} x={x + 0.5} y={y + 0.5} width={w} height={h} />
          ))}
          {blocks.map(([x, y]) => (
            <rect key={y} x={x} y={y} width="11" height="16" strokeWidth="1.500" />
          ))}
        </g>
        <g fill="url(#hatch)" stroke="#222">
          <rect x="959.500" y="284.500" width="50" height="5" />
          <rect x="557.500" y="318.500" width="30" height="10" />
          <rect x="1414.500" y="318.500" width="26" height="10" />
        </g>
        <path d="M561 322.500h23v5h-23z" fill="#fff" stroke="#222" />
        {columns.map(([x, y]) => (
          <g key={`${x}-${y}`} stroke="#222">
            <rect x={x + 0.5} y={y + 0.5} width="19" height="19" fill="#7c7c7c" strokeWidth="1.500" />
            <path d={`M${x + 4} ${y + 4}l12 12M${x + 16} ${y + 4}l-12 12`} />
          </g>
        ))}
        <g fill="none" stroke="#444" strokeWidth="1.200">
          {doors.map((d) => (
            <path key={d} d={d} />
          ))}
          {openings.map((x) => (
            <path key={x} d={`M${x + 0.5} 338v6`} stroke="#111" />
          ))}
        </g>
        <g fill="none" stroke="#222" transform="translate(.5 .5)">
          {thin.map((d) => (
            <path key={d} d={d} />
          ))}
        </g>
        <path d="M1468.500 335v238M1468.500 591v117M1468.500 726v152" stroke="#fff" strokeWidth="2" />
        <g fill="none" stroke="#000" strokeWidth="2.200">
          {heavy.map((d) => (
            <path key={d} d={d} />
          ))}
        </g>
        <g fill="#111">
          <text x="321" y="425" fontSize="38">
            &amp;
          </text>
          <text x="359" y="425" fontSize="39">
            F<tspan fontSize="33">OYER</tspan>
          </text>
          <text x="340" y="502" fontSize="26">
            pe Your
          </text>
        </g>
        <text x="341" y="260" fontSize="26" fill="#6a72b0">
          e
        </text>
        {tables.map((table) => (
          <RoundTable key={`${table.x}-${table.y}`} {...table} />
        ))}
        <path d="M891.500 427.500h286v285h-286z" fill="none" stroke="#3f8fb8" strokeWidth="1.400" />
        {[[1177, 427], [1177, 570], [1177, 712], [1034, 712], [891, 712]].map(([x, y]) => (
          <rect key={`${x}-${y}`} x={x - 3.5} y={y - 3.5} width="8" height="8" fill="#9bd5f7" stroke="#3a87b8" />
        ))}
      </g>
    </svg>
  );
}

/* ---------- windows over the drawing ---------- */

function EventDetails() {
  return (
    <div
      role="dialog"
      aria-label="Event Details"
      className="absolute top-[164px] left-[304px] w-[446px] border border-[#3d8ab0] bg-[#eee] text-sm text-[#222] shadow-[0_4px_16px_rgba(0,0,0,0.35)]"
    >
      <div className="flex h-8 items-center justify-between bg-white pr-3 pl-1">
        <h2>Event Details</h2>
        <button aria-label="Close">
          <svg width="14" height="14" viewBox="0 0 14 14">
            <path d="M1 1l12 12M13 1L1 13" stroke="#333" strokeWidth="1.300" />
          </svg>
        </button>
      </div>
      <form className="flex flex-col px-4 pb-4 font-['Liberation_Sans',sans-serif]">
        <div className="flex h-[53px] justify-between">
          <p className="mt-[15px] h-5 pl-0.5 leading-5">These details will appear on the Guest List reports</p>
          <svg width="75" height="54" viewBox="0 0 75 54" className="mt-[15px] shrink-0 bg-white">
            <g fill="#7a7a7a">
              <circle cx="33" cy="21" r="6.500" />
              <circle cx="48" cy="16" r="6.500" />
              <path d="M21 41c0-8 4-12 9-12l4 6 4-5c5 1 8 4 8 9-8 3-18 4-25 2zM41 28l4-5 4 6 4-5c5 2 7 6 7 11-4 2-9 3-13 2z" />
            </g>
            <path d="M40 35h5v4h4v4h-4v4h-5v-4h-4v-4h4z" fill="#4f9e8e" stroke="#fff" />
            <path d="M49 39h12v4H49z" fill="#cf5a44" />
          </svg>
        </div>
        <label htmlFor="event-name" className="mt-px h-5 pl-0.5 leading-5">
          Event Name:
        </label>
        <input
          id="event-name"
          defaultValue="Chris and Jade's Wedding"
          className="mt-0.5 h-[25px] border border-[#666] bg-white pb-1 pl-px"
        />
        <label htmlFor="event-date" className="mt-[10px] h-5 pl-0.5 leading-5">
          Date:
        </label>
        <input
          id="event-date"
          defaultValue="June 8, 2018"
          className="mt-0.5 h-[25px] border border-[#666] bg-white pb-1 pl-px"
        />
        <div className="mt-[13px] flex justify-between">
          <button type="button" className="h-6 w-[106px] border border-[#adadad] bg-[#e1e1e1]">
            OK
          </button>
          <button type="button" className="h-6 w-[106px] border border-[#adadad] bg-[#e1e1e1]">
            Cancel
          </button>
        </div>
      </form>
      <svg width="18" height="26" viewBox="0 0 18 26" className="absolute top-[192px] left-[115px]">
        <path d="M1 1v20l5-4 3.500 8 3.500-1.500-3.500-8 6.500-.5z" fill="#fff" stroke="#333" strokeWidth="1.300" />
      </svg>
    </div>
  );
}

function NudgeArrow({ turn, active }: { turn: number; active?: boolean }) {
  return (
    <button
      aria-label="Copy in this direction"
      className={`flex h-[35px] w-[35px] items-center justify-center bg-[#e4e4e4] ${
        active ? "border-2 border-[#1976c8]" : "border border-[#c4c4c4]"
      }`}
    >
      <svg width="25" height="25" viewBox="0 0 25 25">
        <path
          d="M12.500 1L24 13h-7v11H8V13H1z"
          fill="#1e90ef"
          stroke="#6ab6f5"
          transform={`rotate(${turn} 12.500 12.500)`}
        />
      </svg>
    </button>
  );
}

function Spinner() {
  return (
    <span className="flex w-[18px] flex-col justify-between py-px">
      {[true, false].map((up) => (
        <span key={String(up)} className="flex h-[10px] items-center justify-center border border-gray-300 bg-[#eee]">
          <svg width="7" height="4" viewBox="0 0 7 4">
            <path d={up ? "M0 4h7L3.500 0z" : "M0 0h7L3.500 4z"} fill="#111" />
          </svg>
        </span>
      ))}
    </span>
  );
}

function CopyPanel() {
  return (
    <div className="absolute top-[20px] right-0 flex h-[117px] w-[228px] bg-[#f0f0f0] font-['Liberation_Sans',sans-serif] text-sm text-[#222]">
      <div className="ml-[5px] grid h-[110px] w-[109px] shrink-0 grid-cols-3 grid-rows-3 gap-x-0.5 gap-y-[3px]">
        <button aria-label="Close" className="flex pt-1.5 pl-[3px]">
          <svg width="12" height="12" viewBox="0 0 12 12">
            <path d="M1 1l10 10M11 1L1 11" stroke="#444" />
          </svg>
        </button>
        <NudgeArrow turn={0} />
        <span />
        <NudgeArrow turn={-90} />
        <span />
        <NudgeArrow turn={90} />
        <span />
        <NudgeArrow turn={180} active />
      </div>
      <div className="flex flex-1 flex-col pt-[5px] pr-1.5">
        <label className="flex h-6 items-center justify-end gap-3">
          Qty
          <span className="flex h-6 w-[69px] border border-gray-300 bg-white">
            <input defaultValue="10" className="w-0 flex-1 pl-0.5" />
            <Spinner />
          </span>
        </label>
        <label className="flex h-6 items-center justify-end gap-3">
          Dist
          <span className="flex h-6 w-[69px] border border-gray-300 bg-white">
            <input defaultValue="0.00" className="w-0 flex-1 pl-0.5" />
            <Spinner />
          </span>
        </label>
        <label className="mt-0.5 flex h-7 items-center justify-end gap-2">
          Units
          <span className="relative flex items-center">
            <select className="h-[26px] w-[69px] appearance-none border border-gray-400 bg-[#e4e4e4] pl-0.5">
              <option>meters</option>
            </select>
            <svg width="10" height="6" viewBox="0 0 10 6" className="absolute right-1">
              <path d="M0 0l5 5 5-5" fill="none" stroke="#555" />
            </svg>
          </span>
        </label>
        <button className="-ml-4 mt-0.5 h-7 shrink-0 self-end border border-[#bbb] bg-[#e4e4e4] px-2 whitespace-nowrap">
          Shape properties
        </button>
      </div>
    </div>
  );
}

const sizeRows = [
  ["X", "33.8797 m"],
  ["Y", "32.66 m"],
  ["Width", "1.8 m"],
  ["Height", "1.8 m"],
  ["Angle", "-90 deg"],
  ["Pin Pos", "Center-Center"],
];

function SizePanel() {
  return (
    <div className="absolute bottom-0 left-5 flex w-[253px] border-2 border-[#9299a2] bg-white text-sm">
      <div className="flex w-[29px] shrink-0 flex-col items-center bg-[#cfd4dc] pt-2 text-[#555]">
        <span className="flex-1 leading-5 [writing-mode:vertical-rl]">Size &amp; Positi...</span>
        <button aria-label="Pin" className={`flex h-7 w-[27px] items-center justify-center ${highlight}`}>
          <svg width="12" height="14" viewBox="0 0 12 14">
            <path d="M2 1.500h8M1 7h10" stroke="#5b4a1c" strokeWidth="1.800" />
            <path d="M3.500 1h5v6h-5zM5 7h2v6H5z" fill="#5b4a1c" />
          </svg>
        </button>
        <button aria-label="Close" className="flex h-[30px] items-center">
          <svg width="11" height="10" viewBox="0 0 11 10">
            <path d="M1 1l9 8M10 1L1 9" stroke="#555" strokeWidth="2.400" />
          </svg>
        </button>
      </div>
      <table className="flex-1 border-collapse">
        <tbody>
          {sizeRows.map(([name, value]) => (
            <tr key={name} className="h-[29px] border-b border-gray-400 last:border-b-0">
              <th className="w-[71px] border-r border-gray-400 bg-[#e9ecf2] pl-1.5 text-left font-normal text-[#555]">
                {name}
              </th>
              <td className="pl-1.5 text-[#222]">{value}</td>
            </tr>
          ))}
        </tbody>
      </table>
    </div>
  );
}

/* ---------- bottom bars ---------- */

const pageArrows = [
  { name: "First page", d: "M1.500 0v12M9 1v10L3 6z" },
  { name: "Previous page", d: "M8 1v10L2 6z" },
  { name: "Next page", d: "M2 1v10l6-5z" },
  { name: "Last page", d: "M8.500 0v12M1 1v10l6-5z" },
];

function PageBar() {
  return (
    <div className="flex h-[22px] shrink-0 items-center border-y border-[#a4aab3] bg-[#dfe3ea] text-sm">
      <div className="flex w-[86px] items-center gap-[11px] pl-[5px]">
        {pageArrows.map((arrow) => (
          <button key={arrow.name} aria-label={arrow.name}>
            <svg width="10" height="12" viewBox="0 0 10 12">
              <path d={arrow.d} fill="#444" stroke="#444" strokeWidth="1.200" />
            </svg>
          </button>
        ))}
      </div>
      <button className="h-5 bg-white pr-2 pl-2.5 leading-5 font-bold text-[#444]">Page-1</button>
      <button aria-label="Insert page">
        <svg width="66" height="20" viewBox="0 0 66 20">
          <path d="M0 0h16L2 19H0z" fill="#fff" />
          <path d="M16 0L2 19h44L62 0" fill="#e9ecf1" stroke="#b0b5bd" />
          <path d="M19 5h14v10h-4l-3 3v-3h-7z" fill="#dce8f8" stroke="#4a6ab0" />
          <circle cx="20" cy="6" r="3" fill="#fbd35a" stroke="#d08a1a" />
        </svg>
      </button>
      <div className="ml-auto flex h-full w-[695px] items-center border-l border-gray-400">
        <div className="h-full w-1.5 border-r border-gray-400 bg-[#f1f3f6]" />
        <svg width="7" height="10" viewBox="0 0 7 10" className="ml-1.5">
          <path d="M7 0v10L0 5z" fill="#444" />
        </svg>
        <div className="ml-[261px] flex h-5 w-[154px] items-center justify-center gap-0.5 rounded-sm border border-gray-400 bg-linear-to-b from-white to-[#dfe3ea]">
          {[0, 1, 2, 3].map((n) => (
            <span key={n} className="h-2.5 w-px bg-gray-500" />
          ))}
        </div>
        <svg width="7" height="12" viewBox="0 0 7 12" className="mr-0.5 ml-auto">
          <path d="M0 0v12l7-6z" fill="#444" />
        </svg>
      </div>
    </div>
  );
}

function RoundButton({ label, d }: { label: string; d: string }) {
  return (
    <button aria-label={label}>
      <svg width="20" height="20" viewBox="0 0 20 20">
        <circle cx="10" cy="10" r="9" fill="#f7f8f9" stroke="#777" strokeWidth="1.300" />
        <path d={d} stroke="#555" strokeWidth="2" />
      </svg>
    </button>
  );
}

function StatusBar() {
  return (
    <footer className="flex h-[23px] shrink-0 items-center overflow-hidden border-t border-gray-500 bg-linear-to-b from-[#eceef1] to-[#c4c9d0] text-sm whitespace-nowrap text-[#444]">
      <span className="w-[92px] pl-[9px]">Page 1 of 1</span>
      <span className="h-5 w-px bg-gray-400" />
      <span className="w-[115px] pl-3">Width: 1.8 m</span>
      <span className="w-[105px]">Height: 1.8 m</span>
      <span className="w-[107px]">Angle: -90 deg</span>
      <span className="h-5 w-px bg-gray-400" />
      <svg width="20" height="18" viewBox="0 0 20 18" className="mx-3">
        <path d="M1 2h18v15H1z" fill="#fff" stroke="#5b7fb8" />
        <path d="M1 2h18v4H1z" fill="#4f7cc8" />
        <path d="M4 9.500h14M4 13.500h14M8 6v11M13 6v11" stroke="#b9cae6" />
        <circle cx="4" cy="4" r="3.500" fill="#e0523a" />
      </svg>
      <span className="h-5 w-px bg-gray-400" />
      <div className="ml-auto flex h-full items-center">
        <span className="mr-1.5 h-5 w-px bg-gray-400" />
        <button aria-label="Normal view" className={`flex h-[21px] w-6 items-center justify-center ${highlight}`}>
          <svg width="16" height="13" viewBox="0 0 16 13">
            <path d="M1 1h14v11H1zM8 1v11M8 6h7" fill="#fff" stroke="#6b5a2c" strokeWidth="1.500" />
          </svg>
        </button>
        <button aria-label="Full screen" className="ml-1.5">
          <svg width="15" height="14" viewBox="0 0 15 14">
            <path d="M0 1h15M2 1v7h11V1M7.500 8v4M4 13h7M5 4h5" fill="none" stroke="#555" strokeWidth="1.500" />
          </svg>
        </button>
        <span className="w-[53px] pl-4">66%</span>
        <RoundButton label="Zoom out" d="M5 10h10" />
        <input
          type="range"
          aria-label="Zoom"
          min="0"
          max="100"
          defaultValue="33"
          className="mx-px h-5 w-[126px] appearance-none bg-transparent [&::-webkit-slider-runnable-track]:h-px [&::-webkit-slider-runnable-track]:bg-[#8b9199] [&::-webkit-slider-thumb]:-mt-[7px] [&::-webkit-slider-thumb]:h-[15px] [&::-webkit-slider-thumb]:w-2.5 [&::-webkit-slider-thumb]:appearance-none [&::-webkit-slider-thumb]:rounded-b-full [&::-webkit-slider-thumb]:border [&::-webkit-slider-thumb]:border-gray-500 [&::-webkit-slider-thumb]:bg-white"
        />
        <RoundButton label="Zoom in" d="M5 10h10M10 5v10" />
        <svg width="20" height="20" viewBox="0 0 20 20" className="ml-2.5">
          <rect x="1" y="1" width="18" height="18" rx="2" fill="#f2f2f2" stroke="#777" strokeWidth="1.500" />
          <path d="M4 4l4 4M16 4l-4 4M4 16l4-4M16 16l-4-4M4 4h3M4 4v3M16 4h-3M16 4v3M4 16h3M4 16v-3M16 16h-3M16 16v-3" stroke="#444" />
        </svg>
        <svg width="20" height="20" viewBox="0 0 20 20" className="ml-[15px]">
          <path d="M14 14l5 5" stroke="#e09a2a" strokeWidth="3" />
          <circle cx="10" cy="10" r="8.500" fill="#cfe0f7" stroke="#667a9a" strokeWidth="1.500" />
          <path d="M10 3l3 3.500H7zM10 17l-3-3.500h6zM3 10l3.500-3v6zM17 10l-3.500 3V7zM6 9h8v2H6zM9 6h2v8H9z" fill="#2355b0" />
        </svg>
        <svg width="5" height="18" viewBox="0 0 5 18" className="ml-5">
          <path d="M6 1H1v6h5M6 10H1v6h5" fill="#fff" stroke="#666" />
        </svg>
      </div>
    </footer>
  );
}

export default function App() {
  return (
    <div className="flex h-screen flex-col overflow-hidden bg-black py-[23px] font-['Open_Sans',sans-serif]">
      <TitleBar />
      <TabBar />
      <Ribbon />
      <div className="flex min-h-0 flex-1 bg-[#c6cbd2] pt-[3px]">
        <ShapesPanel />
        <main className="relative ml-[5px] flex min-w-0 flex-1 flex-col border-l border-[#8c939c]">
          <div className="relative flex min-h-0 flex-1 flex-col">
            <div className="flex shrink-0 border-t border-[#8c939c]">
              <svg width="20" height="20" viewBox="0 0 20 20" className="shrink-0 border-r border-b border-black bg-[#f7f8fa]">
                <path d="M0 10h20M10 0v20" stroke="#888" strokeDasharray="1 1" />
              </svg>
              <HorizontalRuler />
            </div>
            <div className="flex min-h-0 flex-1 overflow-hidden">
              <VerticalRuler />
              <div className="min-w-0 flex-1">
                <FloorPlan />
              </div>
            </div>
            <EventDetails />
            <CopyPanel />
            <SizePanel />
          </div>
          <PageBar />
        </main>
      </div>
      <StatusBar />
    </div>
  );
}
